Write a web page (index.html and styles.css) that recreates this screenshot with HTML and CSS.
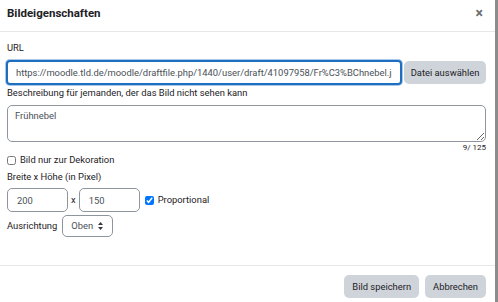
FILE: index.html
```html
<!DOCTYPE html>
<html lang="de">
<head>
    <meta charset="UTF-8">
    <title>Bildeigenschaften</title>
    <link rel="stylesheet" href="styles.css">
</head>
<body>

<div class="modal">
    <div class="modal-header">
        <h5 class="modal-title">Bildeigenschaften</h5>
        <span class="close">&times;</span>
    </div>

    <div class="modal-body">
        <label class="field-label">URL</label>
        <div class="url-row">
            <input type="text" class="url-input" value="https://moodle.tld.de/moodle/draftfile.php/1440/user/draft/41097958/Fr%C3%BChnebel.jpg">
            <button class="btn btn-browse">Datei auswählen</button>
        </div>

        <label class="field-label">Beschreibung für jemanden, der das Bild nicht sehen kann</label>
        <textarea class="alt-text">Frühnebel</textarea>
        <div class="counter">9/ 125</div>

        <label class="check-row">
            <input type="checkbox"> Bild nur zur Dekoration
        </label>

        <label class="field-label size-label">Breite x Höhe (in Pixel)</label>
        <div class="size-row">
            <input type="text" class="size-input" value="200">
            <span class="times">x</span>
            <input type="text" class="size-input" value="150">
            <label class="check-row inline">
                <input type="checkbox" checked> Proportional
            </label>
        </div>

        <div class="align-row">
            <label>Ausrichtung</label>
            <div class="select">
                Oben
                <svg class="arrows" width="5" height="8" viewBox="0 0 5 8">
                    <path d="M2.5 0 L5 3 L0 3 Z M2.5 8 L5 5 L0 5 Z" fill="#343a40"/>
                </svg>
            </div>
        </div>
    </div>

    <div class="modal-footer">
        <button class="btn">Bild speichern</button>
        <button class="btn">Abbrechen</button>
    </div>
</div>

</body>
</html>
```

FILE: styles.css
```css
body {
    margin: 0;
    background-color: #8c8c8c;
    font-family: Roboto, "Liberation Sans", Arial, sans-serif;
    color: #1d2125;
}

.modal {
    width: 495px;
    height: 302px;
    background-color: #ffffff;
    display: flex;
    flex-direction: column;
}

.modal-header {
    display: flex;
    align-items: center;
    justify-content: space-between;
    box-sizing: border-box;
    height: 32px;
    padding: 0 12px 6px 7px;
    border-bottom: 1px solid #e6e8ea;
}

.modal-title {
    margin: 0;
    font-size: 11.5px;
    font-weight: 700;
}

.close {
    font-size: 14px;
    color: #6a6d70;
    font-weight: 700;
}

.modal-body {
    flex: 1;
    padding: 10px 9px 0 7px;
    font-size: 9.4px;
    line-height: 12px;
}

.field-label {
    display: block;
    margin-bottom: 6px;
}

.url-row {
    display: flex;
    align-items: center;
    margin-left: -1px;
    margin-bottom: 2px;
}

.url-input {
    box-sizing: border-box;
    width: 396px;
    height: 25px;
    padding: 0 8px;
    border: 2px solid #1e6fc0;
    border-radius: 4px;
    font: inherit;
    color: #495057;
    box-shadow: 0 0 0 1px #a9c7e8;
    outline: none;
}

.btn {
    font: inherit;
    white-space: nowrap;
    border: none;
    border-radius: 5px;
    background-color: #ced4da;
    color: #1d2125;
    padding: 0 7px;
    height: 23px;
}

.btn-browse {
    margin-left: 2px;
    width: 82px;
    padding: 0;
}

.alt-text {
    display: block;
    box-sizing: border-box;
    width: 479px;
    height: 37px;
    padding: 4px 7px;
    border: 1px solid #8f959e;
    border-radius: 5px;
    font: inherit;
    color: #495057;
    resize: vertical;
}

.counter {
    text-align: right;
    font-size: 8px;
    line-height: 10px;
    margin: 1px 0 1px;
}

.check-row {
    display: flex;
    align-items: center;
    gap: 4px;
    margin-bottom: 5px;
}

.check-row input {
    margin: 0;
    width: 9px;
    height: 9px;
}

.check-row.inline {
    margin: 0 0 0 5px;
}

.size-label {
    margin-bottom: 5px;
}

.size-row {
    display: flex;
    align-items: center;
    margin-bottom: 3px;
}

.size-input {
    box-sizing: border-box;
    width: 61px;
    height: 24px;
    padding: 0 9px;
    border: 1px solid #8f959e;
    border-radius: 5px;
    font: inherit;
    color: #495057;
}

.times {
    margin: 0 3px;
}

.align-row {
    display: flex;
    align-items: center;
    gap: 5px;
}

.select {
    box-sizing: border-box;
    height: 22px;
    width: 51px;
    border: 1px solid #8f959e;
    border-radius: 5px;
    display: flex;
    align-items: center;
    justify-content: space-between;
    padding: 0 9px 0 8px;
    color: #495057;
}

.modal-footer {
    display: flex;
    justify-content: flex-end;
    gap: 6px;
    height: 37px;
    box-sizing: border-box;
    padding: 9px 9px 0;
    border-top: 1px solid #e6e8ea;
    font-size: 9.4px;
}

.modal-footer .btn {
    padding: 0 8px;
}
```
